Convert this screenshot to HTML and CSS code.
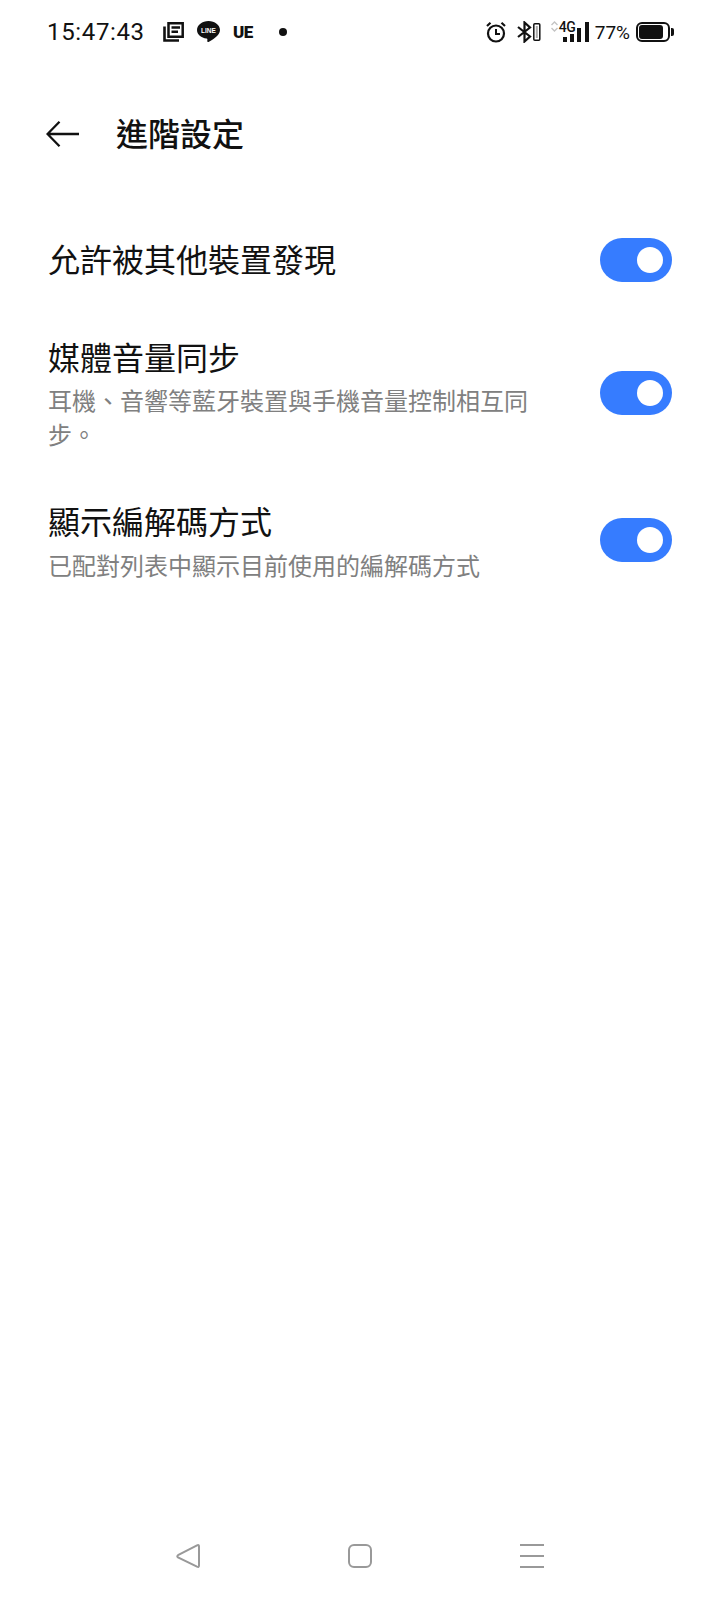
FILE: index.html
```html
<!DOCTYPE html>
<html lang="zh-Hant">
<head>
  <meta charset="UTF-8" />
  <title>進階設定</title>
  <link rel="stylesheet" href="styles.css">
</head>
<body>
  <div class="screen">
    <div class="status">
      <div class="status-left">
        <span class="clock">15:47:43</span>
        <svg class="ic-news" width="21" height="20" viewBox="0 0 21 20">
          <path d="M5.500 1.300H19.700V14.800H5.500Z M8.500 5.500H17 M8.500 9.800H15" fill="none" stroke="#111" stroke-width="2.500"/>
          <path d="M1.500 4.500V18.500H16" fill="none" stroke="#111" stroke-width="2.600"/>
        </svg>
        <svg class="ic-line" width="23" height="22" viewBox="0 0 23 22">
          <path d="M11.500 0C5.200 0 0 4 0 9C0 13.500 4.200 16.900 9.600 17.600C10.400 17.800 10.500 18.300 10.300 19.700C10.200 20.700 10.900 21.300 12 20.700C15 19 23 14.500 23 9C23 4 17.800 0 11.500 0Z" fill="#111"/>
          <text x="11.500" y="11.500" class="line-txt" text-anchor="middle">LINE</text>
        </svg>
        <span class="ue">UE</span>
        <span class="dot"></span>
      </div>
      <div class="status-right">
        <svg class="ic-alarm" width="20" height="22" viewBox="0 0 20 22">
          <circle cx="10" cy="12.500" r="8" fill="none" stroke="#111" stroke-width="2.200"/>
          <path d="M10 8V13H14" fill="none" stroke="#111" stroke-width="2"/>
          <path d="M1 5L4.500 1.800M19 5L15.500 1.800" stroke="#111" stroke-width="2.200"/>
        </svg>
        <svg class="ic-bt" width="24" height="22" viewBox="0 0 24 22">
          <path d="M1 6L13 15.500L7.500 20.500V1.500L13 6.500L1 16" fill="none" stroke="#111" stroke-width="2.200"/>
          <rect x="16.800" y="2.800" width="6" height="16.500" rx="1" fill="none" stroke="#111" stroke-width="1.500"/>
          <rect x="18.800" y="5" width="2" height="12" fill="#aaa"/>
        </svg>
        <div class="signal">
          <svg class="updown" width="7" height="11" viewBox="0 0 7 11">
            <path d="M0.500 4L3.500 1L6.500 4M0.500 7L3.500 10L6.500 7" fill="none" stroke="#c4c4c4" stroke-width="1.400"/>
          </svg>
          <span class="net">4G</span>
          <div class="bars">
            <i class="b1"></i><i class="b2"></i><i class="b3"></i><i class="b4"></i>
          </div>
        </div>
        <span class="pct">77%</span>
        <div class="batt"><div class="batt-fill"></div></div>
        <div class="batt-tip"></div>
      </div>
    </div>

    <div class="topbar">
      <svg class="back" width="33" height="26" viewBox="0 0 33 26">
        <path d="M33 13H2M13.500 0.800L1.500 13L13.500 25.200" fill="none" stroke="#111" stroke-width="2.300"/>
      </svg>
      <h1>進階設定</h1>
    </div>

    <div class="list">
      <div class="row row-one">
        <div class="row-text">
          <div class="row-title">允許被其他裝置發現</div>
        </div>
        <div class="toggle"><span class="knob"></span></div>
      </div>
      <div class="row row-two">
        <div class="row-text">
          <div class="row-title">媒體音量同步</div>
          <div class="row-sub">耳機、音響等藍牙裝置與手機音量控制相互同步。</div>
        </div>
        <div class="toggle"><span class="knob"></span></div>
      </div>
      <div class="row row-three">
        <div class="row-text">
          <div class="row-title">顯示編解碼方式</div>
          <div class="row-sub">已配對列表中顯示目前使用的編解碼方式</div>
        </div>
        <div class="toggle"><span class="knob"></span></div>
      </div>
    </div>

    <div class="navbar">
      <svg width="24" height="24" viewBox="0 0 24 24">
        <path d="M23 2.500V21.500Q23 23.500 21 22.600L2 13.500Q0.500 12.300 2 11.200L21 1.400Q23 0.500 23 2.500Z" fill="none" stroke="#999" stroke-width="2"/>
      </svg>
      <svg width="24" height="24" viewBox="0 0 24 24">
        <rect x="1" y="1" width="22" height="22" rx="5" fill="none" stroke="#999" stroke-width="2"/>
      </svg>
      <svg width="24" height="24" viewBox="0 0 24 24">
        <path d="M0 1H24M0 12H24M0 23H24" stroke="#999" stroke-width="2"/>
      </svg>
    </div>
  </div>
</body>
</html>
```

FILE: styles.css
```css
:root {
  --text: #111;
  --muted: #808080;
  --blue: #367cff;
}

* {
  box-sizing: border-box;
}

html, body {
  margin: 0;
  background: #fff;
}

body {
  font-family: "Noto Sans CJK TC", "Noto Sans", sans-serif;
  color: var(--text);
}

.screen {
  width: 720px;
  height: 1600px;
  display: flex;
  flex-direction: column;
}

/* Status bar */
.status {
  height: 64px;
  padding: 0 46px 0 47px;
  display: flex;
  justify-content: space-between;
  align-items: center;
}

.status-left,
.status-right {
  display: flex;
  align-items: center;
}

.clock {
  font-family: Roboto, sans-serif;
  font-size: 24px;
  letter-spacing: 0.65px;
  width: 116px;
}

.ic-line {
  margin-left: 13px;
}

.line-txt {
  font-family: "Liberation Sans", sans-serif;
  font-size: 6.500px;
  font-weight: 700;
  fill: #fff;
}

.ue {
  font-family: Roboto, sans-serif;
  font-weight: 900;
  font-size: 17px;
  margin-left: 13px;
  letter-spacing: -0.5px;
  width: 21px;
}

.dot {
  width: 8px;
  height: 8px;
  border-radius: 50%;
  background: var(--text);
  margin-left: 25px;
}

.ic-bt {
  margin-left: 11px;
}

.signal {
  width: 38px;
  height: 24px;
  margin-left: 10px;
  position: relative;
}

.updown {
  position: absolute;
  left: 0;
  top: 1px;
}

.net {
  position: absolute;
  left: 8px;
  top: 0;
  font-family: Roboto, sans-serif;
  font-size: 14px;
  font-weight: 500;
  letter-spacing: -0.5px;
  line-height: 14px;
}

.bars {
  position: absolute;
  right: 0;
  bottom: 2px;
  display: flex;
  align-items: flex-end;
  gap: 3px;
}

.bars i {
  width: 4px;
  background: var(--text);
}

.b1 { height: 5px; }
.b2 { height: 8px; }
.b3 { height: 14px; }
.b4 { height: 20px; margin-left: 1px; }

.pct {
  font-family: Roboto, sans-serif;
  font-size: 19px;
  margin-left: 6px;
}

.batt {
  width: 34px;
  height: 20px;
  border: 2px solid var(--text);
  border-radius: 6px;
  padding: 1px;
  margin-left: 6px;
}

.batt-fill {
  width: 24px;
  height: 14px;
  background: var(--text);
  border-radius: 3px;
}

.batt-tip {
  width: 3px;
  height: 8px;
  background: var(--text);
  border-radius: 0 2px 2px 0;
  margin-left: 1px;
}

/* Header */
.topbar {
  height: 72px;
  margin-top: 34px;
  padding-left: 46px;
  display: flex;
  align-items: center;
}

.back {
  flex: none;
}

.topbar h1 {
  margin: 0 0 4px 37px;
  font-size: 32px;
  font-weight: 500;
  line-height: 42px;
}

/* Settings rows */
.list {
  margin-top: 54px;
  padding: 0 48px;
  display: flex;
  flex-direction: column;
}

.row {
  display: flex;
  justify-content: space-between;
  align-items: center;
}

.row-one {
  height: 72px;
}

.row-one .row-title {
  margin-bottom: 4px;
}

.row-two {
  margin-top: 38px;
}

.row-three {
  margin-top: 47px;
}

.row-three .row-sub {
  margin-top: 6px;
}

.row-text {
  width: 480px;
}

.row-title {
  font-size: 32px;
  line-height: 44px;
}

.row-sub {
  font-size: 24px;
  line-height: 34px;
  color: var(--muted);
  margin-top: 5px;
}

.toggle {
  flex: none;
  width: 72px;
  height: 44px;
  border-radius: 22px;
  background: var(--blue);
  display: flex;
  align-items: center;
  justify-content: flex-end;
  padding-right: 9px;
}

.knob {
  width: 26px;
  height: 26px;
  border-radius: 50%;
  background: #fff;
}

/* Nav bar */
.navbar {
  margin-top: auto;
  margin-bottom: 32px;
  padding-left: 176px;
  display: flex;
  gap: 148px;
}
```
